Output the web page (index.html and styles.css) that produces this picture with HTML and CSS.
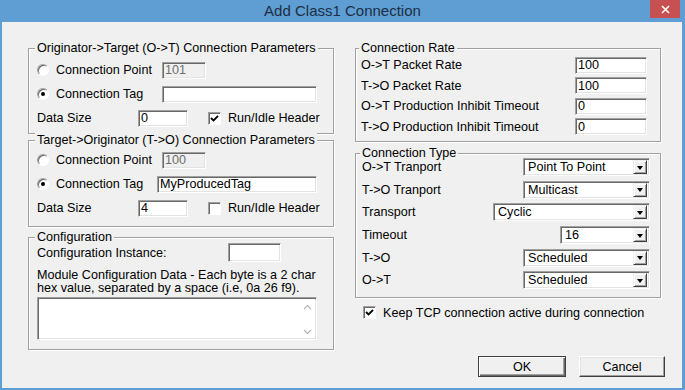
FILE: index.html
```html
<!DOCTYPE html>
<html lang="en">
<head>
    <meta charset="UTF-8">
    <title>Add Class1 Connection</title>
    <link rel="stylesheet" href="styles.css">
</head>
<body>
    <div class="window">
        <div class="titlebar">
            <span class="title">Add Class1 Connection</span>
            <span class="close">
                <svg width="9" height="9" viewBox="0 0 9 9"><path d="M1 1L8 8M8 1L1 8" stroke="#fff" stroke-width="1.6"/></svg>
            </span>
        </div>
        <div class="client">
            <div class="columns">
                <div class="col">
                    <fieldset class="group g-ot">
                        <legend>Originator-&gt;Target (O-&gt;T) Connection Parameters</legend>
                        <div class="row">
                            <label class="opt"><span class="radio"></span>Connection Point</label>
                            <input class="edit point" value="101" disabled>
                        </div>
                        <div class="row">
                            <label class="opt"><span class="radio on"></span>Connection Tag</label>
                            <input class="edit tag" value="">
                        </div>
                        <div class="row">
                            <span class="size-lbl">Data Size</span>
                            <input class="edit size" value="0">
                            <label class="chk"><span class="box on"><svg width="9" height="9" viewBox="0 0 9 9"><path d="M1 4L3.5 6.5L8 2" fill="none" stroke="#000" stroke-width="1.8"/></svg></span>Run/Idle Header</label>
                        </div>
                    </fieldset>
                    <fieldset class="group g-to">
                        <legend>Target-&gt;Originator (T-&gt;O) Connection Parameters</legend>
                        <div class="row">
                            <label class="opt"><span class="radio"></span>Connection Point</label>
                            <input class="edit point" value="100" disabled>
                        </div>
                        <div class="row">
                            <label class="opt short"><span class="radio on"></span>Connection Tag</label>
                            <input class="edit tag wide" value="MyProducedTag">
                        </div>
                        <div class="row">
                            <span class="size-lbl">Data Size</span>
                            <input class="edit size" value="4">
                            <label class="chk"><span class="box"></span>Run/Idle Header</label>
                        </div>
                    </fieldset>
                    <fieldset class="group g-cfg">
                        <legend>Configuration</legend>
                        <div class="row inst">
                            <span class="inst-lbl">Configuration Instance:</span>
                            <input class="edit instance" value="">
                        </div>
                        <p class="note">Module Configuration Data - Each byte is a 2 char<br>hex value, separated by a space (i.e, 0a 26 f9).</p>
                        <div class="memo">
                            <div class="memo-text"></div>
                            <div class="vscroll">
                                <svg width="9" height="6" viewBox="0 0 9 6"><path d="M1 5L4.5 1.5L8 5" fill="none" stroke="#b4b4b4" stroke-width="1.2"/></svg>
                                <svg width="9" height="6" viewBox="0 0 9 6"><path d="M1 1L4.5 4.5L8 1" fill="none" stroke="#b4b4b4" stroke-width="1.2"/></svg>
                            </div>
                        </div>
                    </fieldset>
                </div>
                <div class="col">
                    <fieldset class="group g-rate">
                        <legend>Connection Rate</legend>
                        <div class="row">
                            <span class="rate-lbl">O-&gt;T Packet Rate</span>
                            <input class="edit rate" value="100">
                        </div>
                        <div class="row">
                            <span class="rate-lbl">T-&gt;O Packet Rate</span>
                            <input class="edit rate" value="100">
                        </div>
                        <div class="row">
                            <span class="rate-lbl">O-&gt;T Production Inhibit Timeout</span>
                            <input class="edit rate" value="0">
                        </div>
                        <div class="row">
                            <span class="rate-lbl">T-&gt;O Production Inhibit Timeout</span>
                            <input class="edit rate" value="0">
                        </div>
                    </fieldset>
                    <fieldset class="group g-type">
                        <legend>Connection Type</legend>
                        <div class="rows">
                            <div class="row">
                                <span>O-&gt;T Tranport</span>
                                <div class="combo w127"><span class="combo-val">Point To Point</span><span class="drop"><i></i></span></div>
                            </div>
                            <div class="row">
                                <span>T-&gt;O Tranport</span>
                                <div class="combo w127"><span class="combo-val">Multicast</span><span class="drop"><i></i></span></div>
                            </div>
                            <div class="row">
                                <span>Transport</span>
                                <div class="combo w157"><span class="combo-val">Cyclic</span><span class="drop"><i></i></span></div>
                            </div>
                            <div class="row">
                                <span>Timeout</span>
                                <div class="combo w90"><span class="combo-val">16</span><span class="drop"><i></i></span></div>
                            </div>
                            <div class="row">
                                <span>T-&gt;O</span>
                                <div class="combo w127"><span class="combo-val">Scheduled</span><span class="drop"><i></i></span></div>
                            </div>
                            <div class="row">
                                <span>O-&gt;T</span>
                                <div class="combo w127"><span class="combo-val">Scheduled</span><span class="drop"><i></i></span></div>
                            </div>
                        </div>
                    </fieldset>
                    <label class="chk keep"><span class="box on"><svg width="9" height="9" viewBox="0 0 9 9"><path d="M1 4L3.5 6.5L8 2" fill="none" stroke="#000" stroke-width="1.8"/></svg></span>Keep TCP connection active during connection</label>
                </div>
            </div>
            <div class="buttons">
                <button class="btn default">OK</button>
                <button class="btn">Cancel</button>
            </div>
        </div>
    </div>
</body>
</html>
```
FILE: styles.css
```css
html, body {
    margin: 0;
    padding: 0;
}
body {
    width: 685px;
    height: 390px;
    overflow: hidden;
    font-family: 'Liberation Sans', Arial, sans-serif;
    font-size: 12.6px;
    color: #000;
}
.window {
    width: 685px;
    height: 390px;
    box-sizing: border-box;
    padding: 0 3px 2px 2px;
    background: #5f9ed3;
    display: flex;
    flex-direction: column;
}
.titlebar {
    height: 22px;
    flex: none;
    position: relative;
    display: flex;
    justify-content: center;
    align-items: center;
    margin: 0 -3px 0 -2px;
}
.title {
    font-size: 15px;
    color: #1c2f45;
    margin-top: -1px;
}
.close {
    position: absolute;
    top: 0;
    right: 5px;
    width: 30px;
    height: 18px;
    background: #c75050;
    display: flex;
    justify-content: center;
    align-items: center;
}
.client {
    flex: 1;
    min-height: 0;
    background: #f0f0f0;
    padding: 19px 17px 10px 26px;
    display: flex;
    flex-direction: column;
}
.columns {
    display: flex;
    gap: 21px;
}
.col {
    width: 306px;
    display: flex;
    flex-direction: column;
}
.group {
    margin: 0;
    padding: 0 8px;
    border: 1px solid #a0a0a0;
    box-shadow: 1px 1px 0 #fff, inset 1px 1px 0 #fff;
    min-width: 0;
}
.group legend {
    padding: 0 2px;
    margin-left: -2px;
    line-height: 14px;
    white-space: nowrap;
    background: #f0f0f0;
}
.row {
    display: flex;
    align-items: center;
    height: 24px;
    white-space: nowrap;
}
.g-ot {
    padding-top: 3px;
    padding-bottom: 3px;
}
.g-to {
    margin-top: -1px;
    padding-top: 1px;
    padding-bottom: 6px;
}
.g-cfg {
    margin-top: 3px;
    padding-bottom: 9px;
}
.opt {
    width: 125px;
    display: flex;
    align-items: center;
}
.opt.short {
    width: 120px;
}
.radio {
    width: 10px;
    height: 10px;
    border: 1px solid;
    border-color: #a0a0a0 #fff #fff #a0a0a0;
    border-radius: 50%;
    background: #fff;
    box-shadow: inset 1px 1px 0 #696969;
    margin-right: 7px;
    position: relative;
    flex: none;
}
.radio.on::after {
    content: '';
    position: absolute;
    left: 3px;
    top: 3px;
    width: 4px;
    height: 4px;
    border-radius: 50%;
    background: #000;
}
.edit {
    box-sizing: border-box;
    height: 17px;
    margin: 0;
    padding: 0 2px;
    font: inherit;
    color: #000;
    background: #fff;
    border: 1px solid;
    border-color: #a0a0a0 #fff #fff #a0a0a0;
    box-shadow: inset 1px 1px 0 #696969, inset -1px -1px 0 #e3e3e3;
    outline: none;
}
.edit:disabled {
    background: #f0f0f0;
    color: #6d6d6d;
    -webkit-text-fill-color: #6d6d6d;
    opacity: 1;
}
.point {
    width: 44px;
}
.tag {
    width: 155px;
}
.tag.wide {
    width: 160px;
}
.size-lbl {
    width: 101px;
}
.size {
    width: 50px;
}
.chk {
    display: flex;
    align-items: center;
    margin-left: 20px;
    white-space: nowrap;
}
.box {
    width: 11px;
    height: 11px;
    border: 1px solid;
    border-color: #a0a0a0 #fff #fff #a0a0a0;
    background: #fff;
    box-shadow: inset 1px 1px 0 #696969;
    margin-right: 7px;
    display: flex;
    justify-content: center;
    align-items: center;
    flex: none;
}
.inst {
    height: 19px;
    margin-top: -1px;
}
.inst-lbl {
    width: 191px;
}
.instance {
    width: 53px;
    height: 19px;
}
.note {
    margin: 7px 0 0;
    line-height: 13px;
    white-space: nowrap;
}
.memo {
    margin-top: 2px;
    width: 280px;
    height: 43px;
    box-sizing: border-box;
    display: flex;
    background: #fff;
    border: 1px solid;
    border-color: #a0a0a0 #fff #fff #a0a0a0;
    box-shadow: inset 1px 1px 0 #696969, inset -1px -1px 0 #e3e3e3;
}
.memo-text {
    flex: 1;
}
.vscroll {
    width: 16px;
    margin: 1px 1px 1px 0;
    display: flex;
    flex-direction: column;
    justify-content: space-between;
    align-items: center;
    padding: 5px 0 3px;
}
.g-rate {
    padding-right: 10px;
    padding-left: 5px;
    padding-bottom: 4px;
}
.g-rate .row {
    height: 20.5px;
}
.rate-lbl {
    width: 214px;
}
.rate {
    width: 72px;
}
.g-type {
    margin-top: 4px;
    padding-left: 6px;
    padding-right: 10px;
    padding-bottom: 5px;
}
.rows {
    margin-top: -4px;
}
.g-type .row {
    height: 22.6px;
    justify-content: space-between;
}
.combo {
    box-sizing: border-box;
    height: 18px;
    display: flex;
    align-items: center;
    background: #fff;
    border: 1px solid;
    border-color: #a0a0a0 #fff #fff #a0a0a0;
    box-shadow: inset 1px 1px 0 #696969, inset -1px -1px 0 #e3e3e3;
    padding: 1px 2px 1px 2px;
}
.w127 {
    width: 127px;
}
.w157 {
    width: 157px;
}
.w90 {
    width: 90px;
}
.combo-val {
    flex: 1;
    padding-left: 2px;
}
.drop {
    width: 14px;
    height: 14px;
    box-sizing: border-box;
    background: #f0f0f0;
    border: 1px solid;
    border-color: #f0f0f0 #404040 #404040 #f0f0f0;
    box-shadow: inset 1px 1px 0 #fff, inset -1px -1px 0 #a0a0a0;
    display: flex;
    justify-content: center;
    align-items: center;
}
.drop i {
    width: 0;
    height: 0;
    border-left: 3.5px solid transparent;
    border-right: 3.5px solid transparent;
    border-top: 4px solid #000;
    margin-top: 1px;
}
.keep {
    margin: 8px 0 0 8px;
    height: 14px;
}
.buttons {
    margin-top: 6px;
    display: flex;
    justify-content: flex-end;
    gap: 13px;
}
.btn {
    font: inherit;
    color: #000;
    height: 21px;
    width: 86px;
    padding: 0;
    background: #f0f0f0;
    border: 1px solid;
    border-color: #fff #404040 #404040 #fff;
    box-shadow: inset -1px -1px 0 #a0a0a0, inset 1px 1px 0 #e3e3e3;
}
.btn.default {
    width: 88px;
    border-color: #404040;
    box-shadow: inset 1px 1px 0 #fff, inset -1px -1px 0 #696969, inset -2px -2px 0 #a0a0a0;
}
```
